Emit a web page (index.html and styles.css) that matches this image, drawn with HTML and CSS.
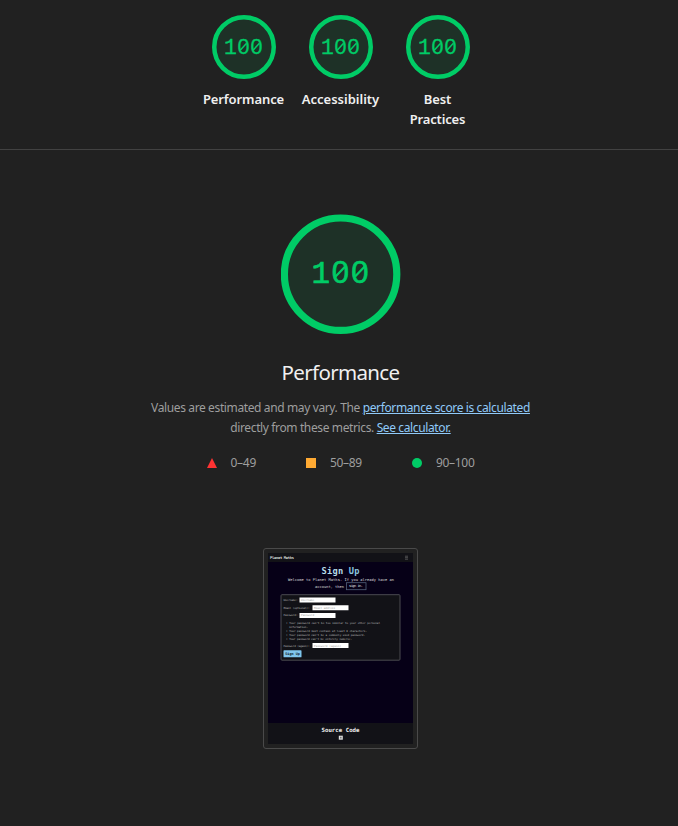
FILE: index.html
```html
<!DOCTYPE html>
<html lang="en">
<head>
<meta charset="utf-8">
<title>Performance report</title>
<link rel="stylesheet" href="styles.css">
</head>
<body>
<header class="scores">
  <div class="score">
    <svg class="gauge" viewBox="0 0 64 64"><circle class="ring" cx="32" cy="32" r="29.75" stroke-width="4.5"/><text class="digits" y="39"><tspan class="one" x="12">1</tspan><tspan x="25.6 38.4">00</tspan></text><path class="slash" stroke-width="1.5" d="M28.2 35.3l6.4-7M41 35.3l6.4-7"/></svg>
    <div class="label"><span class="l-perf">Performance</span></div>
  </div>
  <div class="score">
    <svg class="gauge" viewBox="0 0 64 64"><circle class="ring" cx="32" cy="32" r="29.75" stroke-width="4.5"/><text class="digits" y="39"><tspan class="one" x="12">1</tspan><tspan x="25.6 38.4">00</tspan></text><path class="slash" stroke-width="1.5" d="M28.2 35.3l6.4-7M41 35.3l6.4-7"/></svg>
    <div class="label"><span class="l-acc">Accessibility</span></div>
  </div>
  <div class="score">
    <svg class="gauge" viewBox="0 0 64 64"><circle class="ring" cx="32" cy="32" r="29.75" stroke-width="4.5"/><text class="digits" y="39"><tspan class="one" x="12">1</tspan><tspan x="25.6 38.4">00</tspan></text><path class="slash" stroke-width="1.5" d="M28.2 35.3l6.4-7M41 35.3l6.4-7"/></svg>
    <div class="label">Best<br>Practices</div>
  </div>
</header>
<main class="category">
  <svg class="gauge-large" viewBox="0 0 120 120">
    <circle class="ring" cx="59.6" cy="60.2" r="56.2" stroke-width="7.2"/>
    <text class="digits large" y="68.5"><tspan class="one" x="30.5">1</tspan><tspan x="50.8 70.3">00</tspan></text>
    <path class="slash" stroke-width="2.2" d="M54.6 62.5l9.6-10M74.1 62.5l9.6-10"/>
  </svg>
  <h1>Performance</h1>
  <p class="description"><span class="line1">Values are estimated and may vary. The <a href="#">performance score is calculated</a></span><br><span class="line2">directly from these metrics. <a href="#">See calculator.</a></span></p>
  <div class="scale">
    <span class="range"><svg class="mark"><path fill="#ff3333" d="M5 0l5 10H0z"/></svg>0–49</span>
    <span class="range"><svg class="mark"><rect width="10" height="10" fill="#ffaa33"/></svg>50–89</span>
    <span class="range"><svg class="mark"><circle cx="5" cy="5" r="5" fill="#00cc66"/></svg>90–100</span>
  </div>
  <div class="shot">
    <svg class="page" viewBox="0 0 145 191">
      <rect width="145" height="191" fill="#060017"/>
      <rect width="145" height="9" fill="#121217"/>
      <rect y="170" width="145" height="21" fill="#121217"/>
      <text class="t b" x="2" y="6" textLength="24">Planet Maths</text>
      <path d="M137 3.2h3M137 4.7h3M137 6.2h3" stroke="#777" stroke-width=".6"/>
      <text class="title" x="53.5" y="20.5" textLength="38">Sign <tspan fill="#8cc8e0">Up</tspan></text>
      <text class="t" x="20" y="28.2" textLength="106">Welcome to Planet Maths. If you already have an</text>
      <text class="t" x="47" y="34.5" textLength="29">account, then</text>
      <rect x="78.5" y="29.7" width="19.5" height="7" fill="none" stroke="#53617b" stroke-width=".8"/>
      <text class="t" x="81" y="34.4" textLength="14">sign in.</text>
      <rect x="13" y="41.7" width="119" height="65.5" rx="1" fill="#121217" stroke="#4a4a50"/>
      <g fill="#fff"><path d="M31.5 44.5h36v5h-36zM44.5 52.2h36v5h-36zM31.5 59.9h36v5h-36zM44.5 90h36v5h-36z"/></g>
      <g class="tiny">
        <text x="15.5" y="48" textLength="14">Username:</text>
        <text x="15.5" y="55.6" textLength="26">Email (optional):</text>
        <text x="15.5" y="63.3" textLength="14">Password:</text>
        <text x="18" y="70.8" textLength="94">• Your password can’t be too similar to your other personal</text>
        <text x="21" y="74.6" textLength="19">information.</text>
        <text x="18" y="78.7" textLength="81">• Your password must contain at least 8 characters.</text>
        <text x="18" y="82.6" textLength="79">• Your password can’t be a commonly used password.</text>
        <text x="18" y="86.6" textLength="66">• Your password can’t be entirely numeric.</text>
        <text x="15.5" y="93.6" textLength="26">Password (again):</text>
      </g>
      <g class="hint">
        <text x="33" y="48" textLength="13">Username</text>
        <text x="46" y="55.6" textLength="21">Email address</text>
        <text x="33" y="63.3" textLength="13">Password</text>
        <text x="46" y="93.6" textLength="27">Password (again)</text>
      </g>
      <rect x="15.5" y="97.3" width="18" height="7" rx=".6" fill="#80c5ed"/>
      <text class="button" x="17.3" y="102.3" textLength="14.5">Sign Up</text>
      <text class="source" x="53.5" y="178.5" textLength="38">Source Code</text>
      <rect x="70.8" y="182.7" width="4" height="4" fill="#ddd"/><rect x="72" y="183.8" width="1.6" height="1.7" fill="#777"/>
    </svg>
  </div>
</main>
</body>
</html>
```
FILE: styles.css
```css
* { box-sizing: border-box; }
body {
  margin: 0;
  height: 826px;
  overflow: hidden;
  background: #212121;
  color: #f0f0f0;
  font-family: "Noto Sans", "Open Sans", sans-serif;
}
.scores {
  height: 150px;
  padding: 15px 0 0 3px;
  display: flex;
  justify-content: center;
  border-bottom: 1px solid #424242;
}
.score { width: 97px; text-align: center; }
.gauge { display: block; width: 64px; height: 64px; margin: 0 auto; }
.label {
  margin-top: 10px;
  font-size: 13px;
  line-height: 20px;
  font-weight: 600;
  letter-spacing: -.15px;
  white-space: nowrap;
}
.l-perf { letter-spacing: -.1px; }
.l-acc { letter-spacing: 0; }
.ring { fill: #1e3127; stroke: #00cc66; }
.slash { fill: none; stroke: #00cc66; }
.digits { font: 21.5px "Liberation Sans", sans-serif; fill: #00cc66; stroke: #00cc66; stroke-width: .3px; }
.one { font-family: "Liberation Mono", monospace; }
.digits.large { font-size: 31px; stroke-width: .6px; }
.category {
  padding: 64px 0 0 3px;
  display: flex;
  flex-direction: column;
  align-items: center;
}
.gauge-large { width: 120px; height: 120px; }
h1 {
  margin: 22px 0 0;
  font-size: 20.5px;
  line-height: 32px;
  font-weight: 400;
  letter-spacing: -.65px;
}
.description {
  margin: 10px 0 0;
  font-size: 12px;
  line-height: 20px;
  color: #9e9e9e;
  text-align: center;
  white-space: nowrap;
}
.description a { color: #90caf9; }
.line1, .line2 { letter-spacing: -.375px; }
.scale { display: flex; gap: 50px; margin-top: 15px; }
.range {
  display: flex;
  align-items: center;
  gap: 14px;
  font-size: 12px;
  line-height: 20px;
  letter-spacing: -.3px;
  color: #9e9e9e;
}
.mark { width: 10px; height: 10px; }
.shot {
  width: 155px;
  height: 201px;
  margin-top: 75px;
  padding: 4px;
  border: 1px solid #4a4a4a;
  border-radius: 3px;
}
.page { display: block; width: 145px; height: 191px; }
.page text { font-family: "DejaVu Sans Mono", monospace; }
.page .t { font-size: 3.7px; fill: #ddd; }
.page .b { font-weight: 700; }
.page .title { font-size: 8.7px; font-weight: 700; fill: #b7dce8; }
.tiny { font-size: 2.7px; fill: #bbb; }
.hint { font-size: 2.7px; fill: #999; }
.page .button { font-size: 3.5px; font-weight: 700; fill: #13212a; }
.page .source { font-size: 5.7px; font-weight: 700; fill: #f4f4f4; }
```
